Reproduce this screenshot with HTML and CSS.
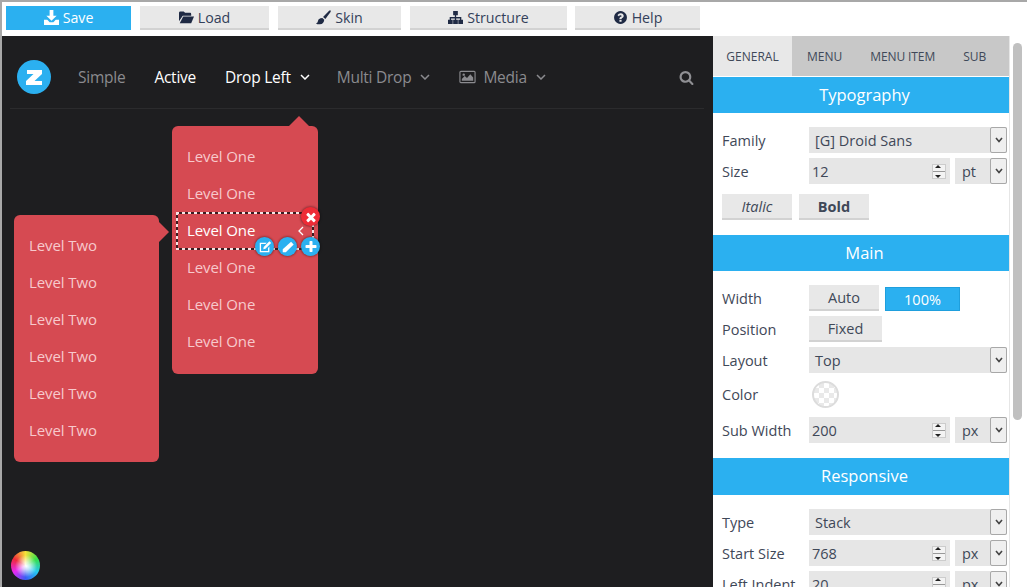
FILE: index.html
```html
<!DOCTYPE html>
<html lang="en">
<head>
<meta charset="utf-8">
<title>Menu Builder</title>
<link rel="stylesheet" href="styles.css">
</head>
<body>
<div class="app">
  <header class="toolbar">
    <button class="tb save"><svg class="ti" viewBox="0 0 16 16"><path d="M6 0h4v6h3.500L8 11.500 2.500 6H6z"/><path d="M0 10.500h3.500L6 13h4l2.500-2.500H16V16H0z"/></svg>Save</button>
    <button class="tb load"><svg class="ti" viewBox="0 0 16 16"><path d="M0 3Q0 1.500 1.500 1.500H5L6.500 3H12Q13 3 13 4.500V6H4L0 12z"/><path d="M4.500 7H16l-3 7H.8z"/></svg>Load</button>
    <button class="tb skin"><svg class="ti" viewBox="0 0 16 16"><path d="M15 .3q1.200.5.500 1.700L10 9.500 7.500 7.500 14 .8z"/><path d="M6.800 8.500l2 1.800Q8.500 14.800 4 15.200 1.500 15.400 0 14.300q2-.5 2.200-2.800 0-2.500 4.600-3z"/></svg>Skin</button>
    <button class="tb structure"><svg class="ti" viewBox="0 0 16 16"><path d="M5.500 1h5v4.500H8.700v2h5.500V10.500H16V15h-5v-4.500h1.800V9H8.700v1.500h1.800V15h-5v-4.500h1.800V9H3.200v1.500H5V15H0v-4.500h1.800V7.500h5.500v-2H5.500z"/></svg>Structure</button>
    <button class="tb help"><svg class="ti" viewBox="0 0 1792 1792"><path d="M1024 1376v-192q0-14-9-23t-23-9h-192q-14 0-23 9t-9 23v192q0 14 9 23t23 9h192q14 0 23-9t9-23zm256-672q0-88-55.500-163t-138.500-116-170-41q-243 0-371 213-15 24 8 42l132 100q7 6 19 6 16 0 25-12 53-68 86-92 34-24 86-24 48 0 85.500 26t37.500 59q0 38-20 61t-68 45q-63 28-115.500 86.500t-52.500 125.500v36q0 14 9 23t23 9h192q14 0 23-9t9-23q0-19 21.500-49.500t54.500-49.500q32-18 49-28.500t46-35 44.500-48 28-60.500 12.500-81zm384 192q0 209-103 385.500t-279.500 279.500-385.500 103-385.500-103-279.500-279.500-103-385.500 103-385.500 279.500-279.500 385.500-103 385.500 103 279.500 279.500 103 385.500z"/></svg>Help</button>
  </header>
  <div class="main">
    <section class="canvas">
      <nav class="nav">
        <span class="logo"><svg viewBox="0 0 34 34"><path d="M10 10h15v4l-7.500 7H25v4H9v-4l7.500-7H10z" fill="#fff"/></svg></span>
        <a class="link muted simple">Simple</a>
        <a class="link active">Active</a>
        <a class="link active drop">Drop Left<svg class="chev" viewBox="0 0 10 6"><path d="M1 1l4 4 4-4"/></svg></a>
        <a class="link muted multi">Multi Drop<svg class="chev" viewBox="0 0 10 6"><path d="M1 1l4 4 4-4"/></svg></a>
        <a class="link muted media"><svg class="pic" viewBox="0 0 18 14"><rect x="1" y="1" width="16" height="12" rx="1"/><path class="fillp" d="M3 11V9l3-3 2.500 2L12 4l3 3.500V11z"/><circle class="fillp" cx="5" cy="4.500" r="1.300"/></svg>Media<svg class="chev" viewBox="0 0 10 6"><path d="M1 1l4 4 4-4"/></svg></a>
        <svg class="search" viewBox="0 0 1792 1792"><path d="M1216 832q0-185-131.500-316.500t-316.500-131.500-316.500 131.500-131.500 316.500 131.500 316.500 316.500 131.500 316.500-131.500 131.500-316.500zm512 832q0 52-38 90t-90 38q-54 0-90-38l-343-342q-179 124-399 124-143 0-273.500-55.500t-225-150-150-225-55.500-273.500 55.500-273.500 150-225 225-150 273.500-55.500 273.500 55.500 225 150 150 225 55.500 273.500q0 220-124 399l343 343q37 37 37 90z"/></svg>
      </nav>
      <ul class="menu one">
        <li>Level One</li>
        <li>Level One</li>
        <li class="selected">Level One<svg class="back" viewBox="0 0 6 10"><path d="M5 1L1 5l4 4"/></svg></li>
        <li>Level One</li>
        <li>Level One</li>
        <li>Level One</li>
      </ul>
      <ul class="menu two">
        <li>Level Two</li>
        <li>Level Two</li>
        <li>Level Two</li>
        <li>Level Two</li>
        <li>Level Two</li>
        <li>Level Two</li>
      </ul>
      <span class="ctl del"><svg viewBox="0 0 1792 1792"><path d="M1490 1322q0 40-28 68l-136 136q-28 28-68 28t-68-28l-294-294-294 294q-28 28-68 28t-68-28l-136-136q-28-28-28-68t28-68l294-294-294-294q-28-28-28-68t28-68l136-136q28-28 68-28t68 28l294 294 294-294q28-28 68-28t68 28l136 136q28 28 28 68t-28 68l-294 294 294 294q28 28 28 68z"/></svg></span>
      <span class="ctl edit"><svg viewBox="0 0 16 16"><path d="M2 3h8L8.500 4.500H3.500v8h8V9L13 7.500V14H2z"/><path d="M13 1.500l2 2L8.500 10 6 10.500 6.500 8z"/></svg></span>
      <span class="ctl pen"><svg viewBox="0 0 16 16"><path d="M11.500 2l3 3L5.500 14H2v-3.500z"/></svg></span>
      <span class="ctl add"><svg viewBox="0 0 1792 1792"><path d="M1600 736v192q0 40-28 68t-68 28h-416v416q0 40-28 68t-68 28h-192q-40 0-68-28t-28-68v-416h-416q-40 0-68-28t-28-68v-192q0-40 28-68t68-28h416v-416q0-40 28-68t68-28h192q40 0 68 28t28 68v416h416q40 0 68 28t28 68z"/></svg></span>
      <span class="wheel"></span>
    </section>
    <aside class="panel">
      <div class="tabs">
        <span class="tab on">GENERAL</span>
        <span class="tab menu-t">MENU</span>
        <span class="tab item-t">MENU ITEM</span>
        <span class="tab sub-t">SUB</span>
      </div>
      <h2 class="head">Typography</h2>
      <div class="form">
        <div class="row"><label>Family</label><div class="sel grow">[G] Droid Sans<span class="caret"><svg viewBox="0 0 10 6"><path d="M2 1l3 3.500L8 1"/></svg></span></div></div>
        <div class="row"><label>Size</label><div class="num">12<span class="spin"></span></div><div class="sel unit">pt<span class="caret"><svg viewBox="0 0 10 6"><path d="M2 1l3 3.500L8 1"/></svg></span></div></div>
        <div class="row btns"><button class="fb it">Italic</button><button class="fb bd">Bold</button></div>
      </div>
      <h2 class="head">Main</h2>
      <div class="form">
        <div class="row"><label>Width</label><button class="fb auto">Auto</button><button class="fb full">100%</button></div>
        <div class="row"><label>Position</label><button class="fb fixed">Fixed</button></div>
        <div class="row"><label>Layout</label><div class="sel grow">Top<span class="caret"><svg viewBox="0 0 10 6"><path d="M2 1l3 3.500L8 1"/></svg></span></div></div>
        <div class="row color"><label>Color</label><span class="swatch"></span></div>
        <div class="row"><label>Sub Width</label><div class="num">200<span class="spin"></span></div><div class="sel unit">px<span class="caret"><svg viewBox="0 0 10 6"><path d="M2 1l3 3.500L8 1"/></svg></span></div></div>
      </div>
      <h2 class="head tall">Responsive</h2>
      <div class="form">
        <div class="row"><label>Type</label><div class="sel grow">Stack<span class="caret"><svg viewBox="0 0 10 6"><path d="M2 1l3 3.500L8 1"/></svg></span></div></div>
        <div class="row"><label>Start Size</label><div class="num">768<span class="spin"></span></div><div class="sel unit">px<span class="caret"><svg viewBox="0 0 10 6"><path d="M2 1l3 3.500L8 1"/></svg></span></div></div>
        <div class="row"><label>Left Indent</label><div class="num">20<span class="spin"></span></div><div class="sel unit">px<span class="caret"><svg viewBox="0 0 10 6"><path d="M2 1l3 3.500L8 1"/></svg></span></div></div>
      </div>
    </aside>
    <div class="scroll"><span class="thumb"></span></div>
  </div>
</div>
</body>
</html>
```
FILE: styles.css
```css
* { box-sizing: border-box; }
html, body { margin: 0; height: 100%; overflow: hidden; background: #fff; }
body { font-family: "Open Sans", "Noto Sans", sans-serif; font-size: 14.500px; color: #3f4858; }
.app { height: 587px; display: flex; flex-direction: column; border-top: 2px solid #a8a8a8; border-left: 2px solid #a8a8a8; overflow: hidden; }

.toolbar { flex: none; height: 34px; padding: 4px 0 0 4px; display: flex; }
.tb { height: 24px; border: 0; border-bottom: 2px solid #d2d2d2; background: #e8e8e8; color: #33405a; font: 14.200px "Open Sans", sans-serif; padding: 0; display: flex; align-items: center; justify-content: center; gap: 4px; }
.ti { width: 15px; height: 15px; fill: #1f2a44; }
.save { width: 125px; margin-right: 9px; background: #2bb0f0; border-bottom-color: #2bb0f0; color: #fff; }
.save .ti { fill: #fff; }
.load { width: 129px; margin-right: 9px; }
.skin { width: 123px; margin-right: 9px; }
.structure { width: 157px; margin-right: 8px; }
.help { width: 125px; }

.main { flex: 1; display: flex; min-height: 0; }
.canvas { position: relative; width: 711px; flex: none; background: #1e1e20; }
.nav { position: relative; margin: 0 9px 0 8px; height: 73px; border-bottom: 1px solid #2b2b2d; display: flex; align-items: center; font-size: 15.500px; letter-spacing: -.25px; padding-top: 9px; }
.logo { width: 34px; height: 34px; border-radius: 50%; background: #2bb0f0; margin-left: 7px; flex: none; }
.logo svg { display: block; width: 34px; height: 34px; }
.link { display: flex; align-items: center; white-space: nowrap; }
.muted { color: #8b8b8f; }
.active { color: #fff; }
.simple { margin-left: 27px; }
.nav .active:not(.drop) { margin-left: 29px; }
.drop { margin-left: 29px; }
.multi { margin-left: 27px; }
.media { margin-left: 29px; }
.chev { width: 10px; height: 6px; margin-left: 9px; fill: none; stroke: currentColor; stroke-width: 1.500; }
.pic { width: 17px; height: 14px; margin-right: 7px; fill: none; stroke: #8b8b8f; stroke-width: 1.200; }
.fillp { fill: #8b8b8f; stroke: none; }
.search { position: absolute; left: 669px; top: 34px; width: 15px; height: 15px; fill: #8f8f93; }

.menu { position: absolute; margin: 0; padding: 12px 0 0; list-style: none; width: 146px; height: 248px; background: #d64a52; border-radius: 6px; color: #f7c9cc; font-size: 15px; letter-spacing: -.1px; }
.menu li { position: relative; height: 37px; line-height: 37px; padding-left: 15px; }
.menu::before { content: ""; position: absolute; }
.one { left: 170px; top: 90px; }
.one::before { left: 117px; top: -10px; border: 10px solid transparent; border-top: 0; border-bottom-color: #d64a52; }
.two { left: 12px; top: 179px; width: 145px; height: 247px; }
.two::before { left: 145px; top: 7px; border: 10px solid transparent; border-right: 0; border-left-color: #d64a52; }
.selected { color: #fff; }
.selected::before { content: ""; position: absolute; left: 4px; top: 0; width: 138px; height: 38px;
  background:
    repeating-linear-gradient(90deg, #f5e5e5 0 3px, #3a1c20 3px 6px) top / 100% 2px no-repeat,
    repeating-linear-gradient(90deg, #f5e5e5 0 3px, #3a1c20 3px 6px) bottom / 100% 2px no-repeat,
    repeating-linear-gradient(180deg, #f5e5e5 0 3px, #3a1c20 3px 6px) left / 2px 100% no-repeat,
    repeating-linear-gradient(180deg, #f5e5e5 0 3px, #3a1c20 3px 6px) right / 2px 100% no-repeat; }
.back { position: absolute; left: 126px; top: 14px; width: 6px; height: 10px; fill: none; stroke: #fff; stroke-width: 1.300; }

.ctl { position: absolute; width: 19px; height: 19px; border-radius: 50%; background: #2bb0f0; box-shadow: 0 0 2px 1px rgba(0,0,0,.3); display: flex; align-items: center; justify-content: center; }
.ctl svg { width: 14px; height: 14px; fill: #fff; }
.del { left: 299px; top: 171px; background: #ee2b36; }
.edit { left: 253px; top: 201px; }
.pen { left: 276px; top: 201px; }
.add { left: 299px; top: 201px; }
.wheel { position: absolute; left: 9px; top: 515px; width: 29px; height: 29px; border-radius: 50%; background: radial-gradient(circle at 52% 52%, #fff 0, rgba(255,255,255,.7) 18%, rgba(255,255,255,0) 52%), conic-gradient(#f5e23a, #35e04b, #25c8f0, #3a5cf5, #e62af0, #f02a3a, #f5e23a); }

.panel { width: 296px; flex: none; overflow: hidden; }
.tabs { height: 40px; display: flex; background: #c8c8c8; font-size: 12px; color: #3f4858; margin-bottom: 1px; }
.tab { line-height: 41px; }
.on { width: 79px; background: #e8e8e8; text-align: center; }
.menu-t { margin-left: 15px; }
.item-t { margin-left: 28px; letter-spacing: -.1px; }
.sub-t { margin-left: 28px; }
.head { margin: 0; height: 36px; line-height: 36px; padding-left: 7px; background: #2bb0f0; color: #fff; text-align: center; font-size: 16.500px; font-weight: 400; }
.head.tall { height: 37px; }
.form { padding: 14px 2px 15px 9px; display: flex; flex-direction: column; gap: 5px; }
.head.tall + .form { padding-top: 14px; }
.row { display: flex; height: 26px; align-items: center; }
.row label { width: 87px; flex: none; }
.row.color { height: 34px; padding-bottom: 2px; }
.row.btns { height: 26px; margin-top: 5px; gap: 7px; }
.sel, .num { position: relative; height: 26px; line-height: 27px; background: #e6e6e6; white-space: nowrap; }
.sel { padding-left: 6px; }
.grow { width: 198px; }
.num { width: 141px; padding-left: 3px; }
.unit { width: 52px; margin-left: 5px; padding-left: 7px; }
.caret { position: absolute; right: 0; top: 0; width: 17px; height: 26px; background: #efefef; border: 1px solid #a8a8a8; border-radius: 2px; display: flex; align-items: center; justify-content: center; }
.caret svg { width: 10px; height: 6px; fill: none; stroke: #444; stroke-width: 1.600; }
.spin { position: absolute; right: 4px; top: 6px; width: 14px; height: 15px; background: linear-gradient(#f3f3f3 0 46%, #999 46% 54%, #f3f3f3 54%); border: 1px solid #ccc; }
.spin::before, .spin::after { content: ""; position: absolute; left: 2px; border: 3.500px solid transparent; }
.spin::before { top: 0; border-top: 0; border-bottom-color: #222; }
.spin::after { bottom: 0; border-bottom: 0; border-top-color: #222; }
.fb { height: 26px; padding: 0; border: 0; border-bottom: 2px solid #d2d2d2; background: #e8e8e8; color: #3f4858; font: 14.500px "Open Sans", sans-serif; }
.it { width: 70px; font-style: italic; }
.bd { width: 70px; font-weight: 700; }
.auto { width: 70px; margin-right: 6px; }
.full { width: 75px; height: 24px; margin-top: 2px; background: #2bb0f0; border: 1px solid #1f9fdd; color: #fff; }
.fixed { width: 73px; }
.swatch { width: 27px; height: 27px; border-radius: 50%; margin-left: 3px; border: 2px solid #dcdcdc; background: repeating-conic-gradient(#e9e9e9 0 25%, #fff 0 50%) 0 0 / 10px 10px; }

.scroll { position: relative; flex: none; width: 18px; border-left: 1px solid #e6e6e6; }
.thumb { position: absolute; left: 3px; top: 7px; width: 9px; height: 377px; border-radius: 5px; background: #c0c0c0; }
```
